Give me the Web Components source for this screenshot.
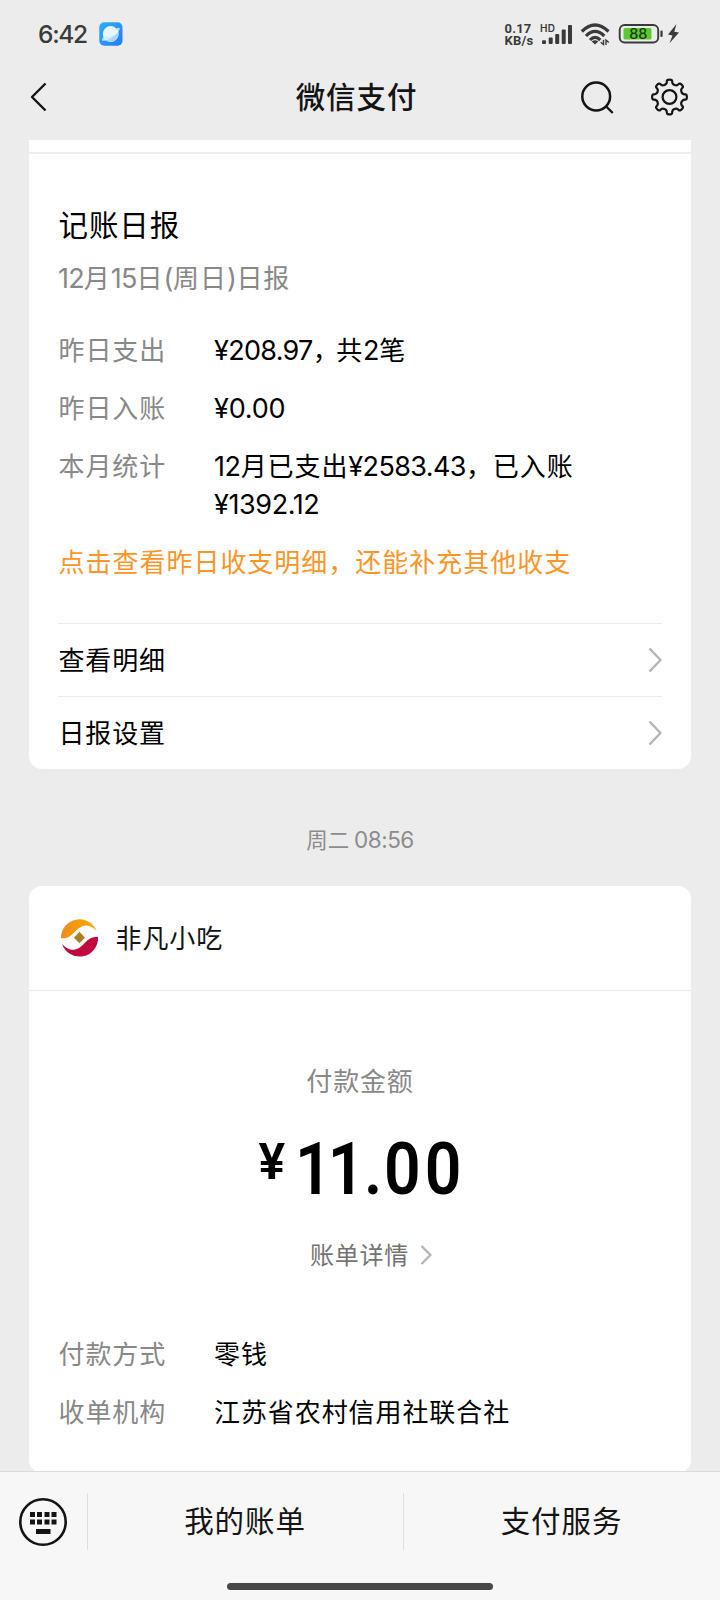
<!DOCTYPE html>
<html lang="zh-CN">
<head>
<meta charset="utf-8">
<title>微信支付</title>
<style>
html,body{margin:0;padding:0}
body{width:720px;height:1600px;overflow:hidden;background:#ececec;font-family:"Noto Sans CJK SC","Noto Sans",sans-serif;color:#000}
</style>
</head>
<body>
<pay-screen></pay-screen>
<script>
const define = (name, html, setup) => {
  const tpl = document.createElement('template');
  tpl.innerHTML = html;
  customElements.define(name, class extends HTMLElement {
    constructor() {
      super();
      this.attachShadow({mode: 'open'}).append(tpl.content.cloneNode(true));
    }
    connectedCallback() { if (setup) setup(this, this.shadowRoot); }
  });
};

define('num-run', `<style>:host{display:inline;font-family:Inter,sans-serif;font-size:27px;line-height:1;letter-spacing:var(--ls,-.4px)}</style><slot></slot>`);

define('status-bar', `<style>
:host{display:flex;height:68px;align-items:center;color:#3a3a3a;box-sizing:border-box;padding-left:38px}
.time{font:500 24.5px/34px Inter,sans-serif;letter-spacing:-1.3px;width:60.5px}
.app{display:block}
.speed{margin-left:382px;width:35.5px;font:700 13px/12.5px Roboto,sans-serif;letter-spacing:.2px;white-space:nowrap;padding-top:2px}
.speed span{display:block;height:12.5px}
.sys{display:block}
</style>
<div class="time">6:42</div>
<svg class="app" width="24" height="24" viewBox="0 0 24 24">
<defs><linearGradient id="g" x1="0" y1="0" x2="1" y2="1"><stop offset="0" stop-color="#2bb0fb"/><stop offset="1" stop-color="#2878fa"/></linearGradient></defs>
<rect x=".3" y=".3" width="23.2" height="23.4" rx="5" fill="url(#g)"/>
<circle cx="11.7" cy="12" r="7.9" fill="#eaf6ff"/>
<path d="M4.5 15.5C9 16.8 17 12.5 19.5 9.5C20 15 16.500 19.800 11.800 19.900C8.500 19.900 5.500 18 4.500 15.500Z" fill="#a5d8fd"/>
<path d="M3.200 18.800C2.700 17.500 3.600 15.600 4.600 14.500L5 16C9 17 16.500 12.500 18.500 8L17 6.500C19 5.700 20.700 5.400 20.800 6.500C21 10 10 19.600 3.200 18.800Z" fill="#eef8ff" opacity=".75"/>
</svg>
<div class="speed"><span>0.17</span><span>KB/s</span></div>
<svg class="sys" width="142" height="28" viewBox="540 20 142 28" fill="#3a3a3a">
<text x="540" y="31.500" font-family="Inter" font-weight="600" font-size="10" letter-spacing=".2">HD</text>
<rect x="542" y="40.300" width="4" height="3.700" rx="1"/><rect x="548.700" y="37.500" width="4" height="6.500" rx="1"/><rect x="555.200" y="34" width="4" height="10" rx="1"/><rect x="561.700" y="29.500" width="4" height="14.500" rx="1"/><rect x="568" y="25" width="4" height="19" rx="1"/>
<g fill="none" stroke="#3a3a3a" stroke-width="3.200"><path d="M581.800 31.500Q595 18.500 608.500 31.500"/><path d="M586 36Q595 26.800 604.300 36"/><path d="M590 40Q595 34.800 600.300 40"/></g>
<path d="M591.700 41.500Q595 38.800 598.300 41.500L595 44.500Z"/>
<path d="M603.500 39.800V44.600L600.700 42.200M606 45V40L608.800 42.600" stroke="#3a3a3a" stroke-width="1.400" fill="none"/>
<rect x="619.700" y="25" width="38.500" height="17.500" rx="5" fill="none" stroke="#3a3a3a" stroke-width="1.900"/>
<rect x="623.500" y="28" width="28" height="11.500" rx="1.500" fill="#58cb2e"/>
<text x="638.300" y="39" text-anchor="middle" font-family="Inter" font-weight="500" font-size="14.500" fill="#23351b">88</text>
<rect x="660.400" y="30.600" width="2.200" height="6.500" rx="1"/>
<path d="M676.500 24L668 34.500L672.500 35.400L669.500 43.300L679 32.500L674.300 31.700Z"/>
</svg>`);

define('nav-bar', `<style>
:host{display:flex;height:72px;align-items:center;box-sizing:border-box;padding:0 30px 14px;color:#141414}
h1{flex:1;margin:-4px 0 0;text-align:center;font-weight:500;font-size:29.500px;line-height:44px;letter-spacing:.9px;padding-left:84px}
svg{display:block;fill:none;stroke:#141414;stroke-width:2.400;stroke-linecap:round;stroke-linejoin:round}
.back{width:20px;height:32px}
.find{width:36px;height:36px;margin:1px 34px 0 0}
.gear{width:40px;height:40px;stroke-width:2.200}
.tools{display:flex;align-items:center;margin-right:-9px;width:120px;box-sizing:border-box}
</style>
<svg class="back" viewBox="30 81.500 20 32"><path d="M45.500 84L32 97.500L45.500 111" stroke-linecap="butt"/></svg>
<h1><slot></slot></h1>
<div class="tools">
<svg class="find" viewBox="578.800 79 36 36"><circle cx="596" cy="95.500" r="13.900" stroke-width="2.500"/><path d="M606 105.500L612.500 112" stroke-linecap="butt"/></svg>
<svg class="gear" viewBox="-20.500 -20 40 40"><path class="teeth"/><circle r="6.900"/></svg>
</div>`, (host, root) => {
  const pts = [];
  for (let i = 0; i < 8; i++)
    for (const [r, o] of [[13, -19], [14.200, -10.500], [17.600, -9], [17.600, 9], [14.200, 10.500], [13, 19]]) {
      const a = (i * 45 + o - 90) * Math.PI / 180;
      pts.push([r * Math.cos(a), r * Math.sin(a)]);
    }
  const mid = (a, b) => ((a[0] + b[0]) / 2).toFixed(2) + ' ' + ((a[1] + b[1]) / 2).toFixed(2);
  let d = 'M' + mid(pts[pts.length - 1], pts[0]);
  pts.forEach((p, i) => d += 'Q' + p[0].toFixed(2) + ' ' + p[1].toFixed(2) + ' ' + mid(p, pts[(i + 1) % pts.length]));
  root.querySelector('.teeth').setAttribute('d', d + 'Z');
});

define('info-row', `<style>
:host{display:grid;grid-template-columns:155.5px 1fr;font-size:26px;line-height:38px;letter-spacing:.92px;margin:0 0 20px -.5px}
.k{color:#888}
</style><span class="k"><slot name="label"></slot></span><span><slot></slot></span>`);

define('link-row', `<style>
:host{display:flex;height:73px;box-sizing:border-box;border-top:1px solid #ebebeb;align-items:center;justify-content:space-between;font-size:26px;line-height:38px;letter-spacing:.85px;margin:0 -1px}
span{padding-left:.5px;margin-top:-3px}
svg{display:block;fill:none;stroke:#b2b2b2;stroke-width:2.300}
</style><span><slot></slot></span><svg width="14" height="26" viewBox="0 0 14 26"><path d="M1.500 1.500L12.500 13L1.500 24.500"/></svg>`);

define('daily-card', `<style>
:host{display:block;height:629px;box-sizing:border-box;background:#fff;border-radius:0 0 13px 13px;margin:0 29px}
.edge{height:12px;border-bottom:2px solid #efefef}
.body{padding:0 30px}
h2{margin:0 0 0 -.5px;padding-top:47px;font-weight:400;font-size:29.500px;line-height:44px;letter-spacing:.9px}
.date{color:#888;font-size:26px;line-height:38px;letter-spacing:.95px;padding:13px 0 34px;margin-left:-1px}
.hint{color:#fa9528;font-size:26px;line-height:38px;letter-spacing:.98px;margin:0 0 43px -.5px;white-space:nowrap}
.tight{letter-spacing:-2.500px}
</style>
<div class="edge"></div><div class="body">
<h2>记账日报</h2>
<div class="date"><num-run style="--ls:-.8px">12</num-run>月<num-run style="--ls:-.8px">15</num-run>日<num-run>(</num-run>周日<num-run>)</num-run>日报</div>
<info-row><span slot="label">昨日支出</span><num-run style="--ls:-.7px">¥208.97</num-run><span class="tight">，</span>共<num-run>2</num-run>笔</info-row>
<info-row><span slot="label">昨日入账</span><num-run style="--ls:-.2px">¥0.00</num-run></info-row>
<info-row><span slot="label">本月统计</span><num-run>12</num-run>月已支出<num-run style="--ls:-.6px">¥2583.43</num-run>，已入账<br><num-run>¥1392.12</num-run></info-row>
<div class="hint">点击查看昨日收支明细，还能补充其他收支</div>
<link-row>查看明细</link-row>
<link-row>日报设置</link-row>
</div>`);

define('time-stamp', `<style>:host{display:block;height:117px;box-sizing:border-box;padding-top:53px;text-align:center;color:#8c8c8c;font-size:21.500px;line-height:34px}num-run{font-size:22.500px}</style><slot></slot> <num-run style="--ls:-.5px">08:56</num-run>`);

define('receipt-card', `<style>
:host{display:block;height:587px;background:#fff;border-radius:13px;margin:0 29px}
header{display:flex;align-items:center;height:104px;border-bottom:1px solid #ebebeb;padding-left:31px;gap:16.500px;font-size:26px;letter-spacing:.9px;line-height:38px;color:#141414}
header svg{display:block}
header span{margin-top:-3px}
.cap{text-align:center;color:#888;font-size:26px;line-height:38px;letter-spacing:.85px;padding-top:70px}
.amount{display:flex;font-family:Roboto,sans-serif;font-weight:600;line-height:74px;height:74px;margin-top:33px;padding-left:229.500px;color:#000}
.yen{font-size:50px;line-height:60px;width:36px}
.val{font-size:73px;transform:scaleX(.88);transform-origin:0 50%;letter-spacing:4.800px;white-space:nowrap}
.one{letter-spacing:-4.600px}
.two{letter-spacing:-.5px}
.dot{letter-spacing:2px}
.more{display:flex;justify-content:center;align-items:center;gap:11px;color:#737373;font-size:24px;line-height:36px;letter-spacing:.8px;margin-top:30px;margin-left:22px}
.more svg{display:block;fill:none;stroke:#b2b2b2;stroke-width:2.200;margin-top:1px}
.rows{padding:62px 30px 0}
</style>
<header><svg width="39" height="38" viewBox="0 0 39 38"><defs><linearGradient id="o"><stop offset="0" stop-color="#f08a1c"/><stop offset="1" stop-color="#f9b000"/></linearGradient></defs>
<path d="M1 19A18.500 18.500 0 0 1 36.800 12.300C31 6 25 4.300 18.500 9.500C12 15 9 20.500 1 19Z" fill="url(#o)"/>
<path d="M38 18A18.500 18.500 0 0 1 2 25C8 31.500 14.500 32.800 21 27.500C26.500 22.500 30 17 38 18Z" fill="#c0093f"/>
<path d="M19.500 12.800L25 18.700L19.500 24.300L13.900 18.700Z" fill="#a98127"/></svg><span>非凡小吃</span></header>
<div class="cap">付款金额</div>
<div class="amount"><span class="yen">¥</span><span class="val"><span class="one">1</span><span class="two">1</span><span class="dot">.</span>00</span></div>
<div class="more"><span>账单详情</span><svg width="12" height="20" viewBox="0 0 12 20"><path d="M1.500 1L10.500 10L1.500 19"/></svg></div>
<div class="rows">
<info-row><span slot="label">付款方式</span>零钱</info-row>
<info-row><span slot="label">收单机构</span>江苏省农村信用社联合社</info-row>
</div>`);

define('menu-bar', `<style>
:host{display:block;position:absolute;left:0;top:1471px;width:720px;height:129px;box-sizing:border-box;background:#f7f7f7;border-top:1px solid #dcdcdc}
.row{display:grid;grid-template-columns:87px 316px 1fr;height:57px;padding-top:21px}
.row>*{display:flex;align-items:center;justify-content:center}
.row>*+*{border-left:1px solid #dfdfdf;font-size:29.500px;line-height:44px;letter-spacing:.9px;color:#141414}
.row>*+* span{margin:-5px 0 0 -1px}
.row svg{display:block;margin-left:-1px}
.pill{width:266px;height:6.500px;border-radius:4px;background:#484848;margin:33px auto 0}
</style>
<div class="row"><div><svg width="50" height="50" viewBox="-25 -25 50 50" fill="#141414"><circle r="22.700" fill="none" stroke="#141414" stroke-width="2.600"/>
<path d="M-13 -10h5v5h-5zM-6 -10h5v5h-5zM1.500 -10h5v5h-5zM8.500 -10h5v5h-5zM-13 -2.500h5v5h-5zM-6 -2.500h5v5h-5zM1.500 -2.500h5v5h-5zM8.500 -2.500h5v5h-5zM-7 7h14.500v5h-14.500z"/></svg></div><div><span>我的账单</span></div><div><span>支付服务</span></div></div>
<div class="pill"></div>`);

define('pay-screen', `<style>:host{display:block;position:relative;width:720px;height:1600px;overflow:hidden}</style>
<status-bar></status-bar>
<nav-bar>微信支付</nav-bar>
<daily-card></daily-card>
<time-stamp>周二</time-stamp>
<receipt-card></receipt-card>
<menu-bar></menu-bar>`);
</script>
</body>
</html>
